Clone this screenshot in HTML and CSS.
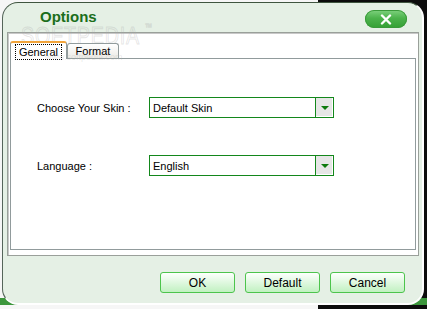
FILE: index.html
```html
<!DOCTYPE html>
<html lang="en">
<head>
    <meta charset="UTF-8">
    <title>Options</title>
    <link rel="stylesheet" href="styles.css">
</head>
<body>

    <div class="window">
        <!-- watermark -->
        <div class="watermark">SOFTPEDIA<span class="tm">™</span></div>
        <div class="watermark-url">www.softpedia.com</div>

        <!-- Title bar -->
        <div class="titlebar">
            <div class="title">Options</div>
            <div class="close-button">
                <svg width="12" height="11" viewBox="0 0 12 11">
                    <path d="M2 1.5 L10 9.5 M10 1.5 L2 9.5" stroke="#fff" stroke-width="2.4" stroke-linecap="round"/>
                </svg>
            </div>
        </div>

        <!-- Tabs panel -->
        <div class="panel">
            <div class="tabs">
                <div class="tab tab-active"><span class="focus">General</span></div>
                <div class="tab">Format</div>
            </div>
            <div class="tab-content">
                <div class="row">
                    <div class="label">Choose Your Skin :</div>
                    <div class="select">
                        <div class="select-value">Default Skin</div>
                        <div class="select-arrow"><span class="triangle"></span></div>
                    </div>
                </div>
                <div class="row">
                    <div class="label">Language :</div>
                    <div class="select">
                        <div class="select-value">English</div>
                        <div class="select-arrow"><span class="triangle"></span></div>
                    </div>
                </div>
            </div>
        </div>

        <!-- Buttons -->
        <div class="buttons">
            <div class="button">OK</div>
            <div class="button">Default</div>
            <div class="button">Cancel</div>
        </div>
    </div>

</body>
</html>
```

FILE: styles.css
```css
/* Generel styling */
html {
    background:
        linear-gradient(to bottom, transparent 298px, #3c963c 298px),
        linear-gradient(to right, #f6f6f6 318px, #0c0c0c 318px);
}

body {
    margin: 0;
    font-family: "Liberation Sans", Arial, sans-serif;
    font-size: 11px;
    color: #000;
}

/* Vinduet */
.window {
    position: relative;
    box-sizing: border-box;
    width: 422px;
    height: 303px;
    margin: 2px 0 0 2px;
    background: #e5f0e5;
    border-top: 1px solid #3f553f;
    border-left: 1px solid #55655a;
    border-right: 2px solid #fff;
    border-bottom: 2px solid #fff;
    border-radius: 16px;
    display: flex;
    flex-direction: column;
}

/* Titlebar */
.titlebar {
    display: flex;
    justify-content: space-between;
    align-items: flex-start;
    height: 29px;
    padding: 0 15px 0 37px;
}

.title {
    margin-top: 5px;
    font-size: 15px;
    font-weight: bold;
    color: #1b6e1b;
    position: relative;
    z-index: 3;
}

.close-button {
    margin-top: 7px;
    width: 42px;
    height: 18px;
    border-radius: 9px;
    background: linear-gradient(to bottom, #7fd27f 0%, #4cb34c 45%, #34a034 100%);
    box-shadow: inset 0 0 0 1px #3a9a3a;
    display: flex;
    justify-content: center;
    align-items: center;
}

/* Watermark */
.watermark {
    position: absolute;
    left: 18px;
    top: 19px;
    font-size: 24px;
    letter-spacing: 1px;
    color: transparent;
    -webkit-text-stroke: 1px rgba(170, 170, 170, 0.3);
    transform: scaleX(0.82);
    transform-origin: left top;
}

.watermark .tm {
    font-size: 9px;
    vertical-align: top;
    margin-left: 6px;
}

.watermark-url {
    position: absolute;
    left: 42px;
    top: 49px;
    font-size: 9px;
    color: rgba(180, 180, 180, 0.3);
    z-index: 2;
}

/* Panel med faner */
.panel {
    box-sizing: border-box;
    height: 224px;
    margin: 0 3px 0 4px;
    padding: 8px 2px 5px 2px;
    background: #fff;
    border: 1px solid #9aa09a;
    box-shadow: inset 1px 1px 0 #c8c8c8;
    display: flex;
    flex-direction: column;
}

.tabs {
    display: flex;
    align-items: flex-end;
    height: 18px;
    margin-bottom: -1px;
    position: relative;
    z-index: 1;
}

.tab {
    box-sizing: border-box;
    height: 15px;
    width: 52px;
    margin-bottom: 1px;
    border: 1px solid #919b9c;
    border-bottom: none;
    border-radius: 3px 3px 0 0;
    background: linear-gradient(to bottom, #ffffff, #ecebe6);
    display: flex;
    justify-content: center;
    align-items: center;
    font-size: 11px;
}

.tab-active {
    width: 57px;
    height: 18px;
    margin-bottom: 0;
    border-top: 2px solid #f2a43a;
    background: #fff;
    padding-top: 1px;
}

.focus {
    outline: 1px dotted #000;
    outline-offset: 1px;
    padding: 0 2px;
}

.tab-content {
    flex: 1;
    border: 1px solid #919b9c;
    padding: 38px 0 0 26px;
    display: flex;
    flex-direction: column;
    gap: 37px;
}

/* Rækker */
.row {
    display: flex;
    align-items: center;
}

.label {
    width: 112px;
}

.select {
    box-sizing: border-box;
    width: 185px;
    height: 21px;
    border: 1px solid #13871b;
    display: flex;
}

.select-value {
    flex: 1;
    padding-left: 3px;
    display: flex;
    align-items: center;
}

.select-arrow {
    box-sizing: border-box;
    width: 18px;
    border-left: 1px solid #13871b;
    background: #e6e6e6;
    box-shadow: inset -1px -1px 0 #fff;
    display: flex;
    justify-content: center;
    align-items: center;
}

.triangle {
    width: 0;
    height: 0;
    border-left: 4px solid transparent;
    border-right: 4px solid transparent;
    border-top: 4px solid #0d7a0d;
}

/* Knapper */
.buttons {
    display: flex;
    justify-content: flex-end;
    gap: 10px;
    padding: 16px 17px 0 0;
}

.button {
    box-sizing: border-box;
    width: 75px;
    height: 21px;
    border: 1px solid #4cc44c;
    border-radius: 3px;
    background: linear-gradient(to bottom, #fdfffd, #c1f1c1);
    display: flex;
    justify-content: center;
    align-items: center;
    font-size: 12px;
}
```
